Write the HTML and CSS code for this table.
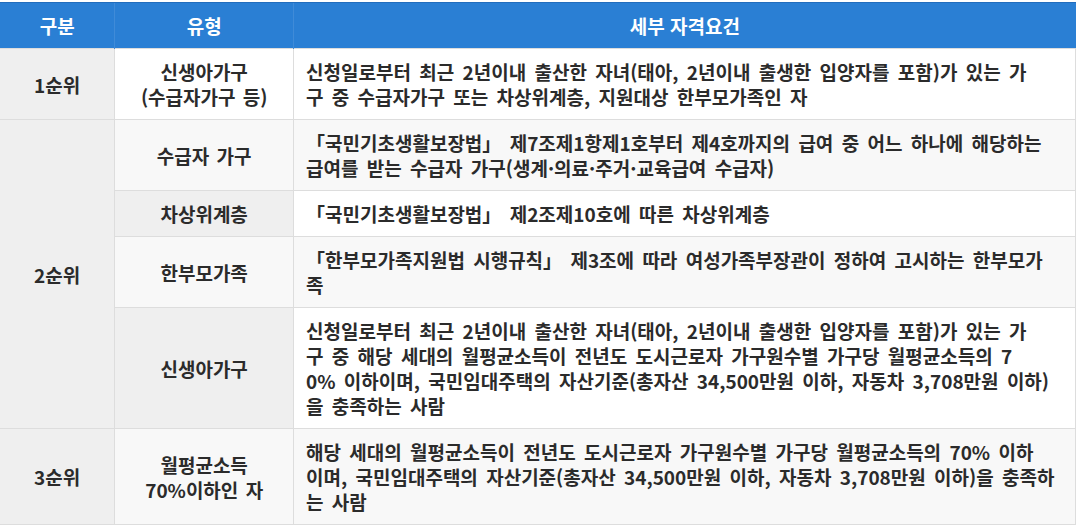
FILE: index.html
```html
<!DOCTYPE html>
<html lang="ko">
<head>
<meta charset="utf-8">
<link rel="stylesheet" href="styles.css">
</head>
<body>
<div class="wrap">
<table class="qual">
  <colgroup>
    <col class="c1"><col class="c2"><col class="c3">
  </colgroup>
  <thead>
    <tr><th>구분</th><th>유형</th><th>세부 자격요건</th></tr>
  </thead>
  <tbody>
    <tr>
      <td class="rank">1순위</td>
      <td class="type white">신생아가구<br>(수급자가구 등)</td>
      <td class="desc white">신청일로부터 최근 2년이내 출산한 자녀(태아, 2년이내 출생한 입양자를 포함)가 있는 가<br>구 중 수급자가구 또는 차상위계층, 지원대상 한부모가족인 자</td>
    </tr>
    <tr>
      <td class="rank" rowspan="4">2순위</td>
      <td class="type light">수급자 가구</td>
      <td class="desc light">「국민기초생활보장법」 제7조제1항제1호부터 제4호까지의 급여 중 어느 하나에 해당하는<br>급여를 받는 수급자 가구(생계·의료·주거·교육급여 수급자)</td>
    </tr>
    <tr>
      <td class="type gray">차상위계층</td>
      <td class="desc white">「국민기초생활보장법」 제2조제10호에 따른 차상위계층</td>
    </tr>
    <tr>
      <td class="type light">한부모가족</td>
      <td class="desc light">「한부모가족지원법 시행규칙」 제3조에 따라 여성가족부장관이 정하여 고시하는 한부모가<br>족</td>
    </tr>
    <tr>
      <td class="type gray">신생아가구</td>
      <td class="desc white">신청일로부터 최근 2년이내 출산한 자녀(태아, 2년이내 출생한 입양자를 포함)가 있는 가<br>구 중 해당 세대의 월평균소득이 전년도 도시근로자 가구원수별 가구당 월평균소득의 7<br>0% 이하이며, 국민임대주택의 자산기준(총자산 34,500만원 이하, 자동차 3,708만원 이하)<br>을 충족하는 사람</td>
    </tr>
    <tr>
      <td class="rank">3순위</td>
      <td class="type light">월평균소득<br>70%이하인 자</td>
      <td class="desc light">해당 세대의 월평균소득이 전년도 도시근로자 가구원수별 가구당 월평균소득의 70% 이하<br>이며, 국민임대주택의 자산기준(총자산 34,500만원 이하, 자동차 3,708만원 이하)을 충족하<br>는 사람</td>
    </tr>
  </tbody>
</table>
</div>
</body>
</html>
```

FILE: styles.css
```css
html, body {
  margin: 0;
  padding: 0;
  background: #ffffff;
}
.wrap {
  padding-top: 2px;
}
.qual {
  width: 1076px;
  border-collapse: collapse;
  font-family: "Noto Sans CJK KR", "Noto Sans", sans-serif;
  font-weight: 700;
  font-size: 19px;
  line-height: 25px;
  color: #2b2b2b;
}
.c1 { width: 115px; }
.c2 { width: 179px; }
.c3 { width: 782px; }
.qual th {
  background: #2a7fd4;
  color: #ffffff;
  height: 45px;
  padding: 0;
  text-align: center;
  font-size: 19px;
  border-top: 1px solid #226dbd;
  border-left: 1px solid #3f8bd8;
}
.qual th:first-child {
  border-left: none;
}
.qual td {
  border: 1px solid #dddddd;
  padding: 10px 12px;
  vertical-align: middle;
}
.qual td.rank {
  background: #efefef;
  text-align: center;
  border-left: none;
}
.qual td.type {
  text-align: center;
  word-spacing: 2px;
}
.qual td.desc {
  text-align: left;
  white-space: nowrap;
  word-spacing: 3px;
}
.white { background: #ffffff; }
.light { background: #f8f8f8; }
.gray { background: #efefef; }
```
